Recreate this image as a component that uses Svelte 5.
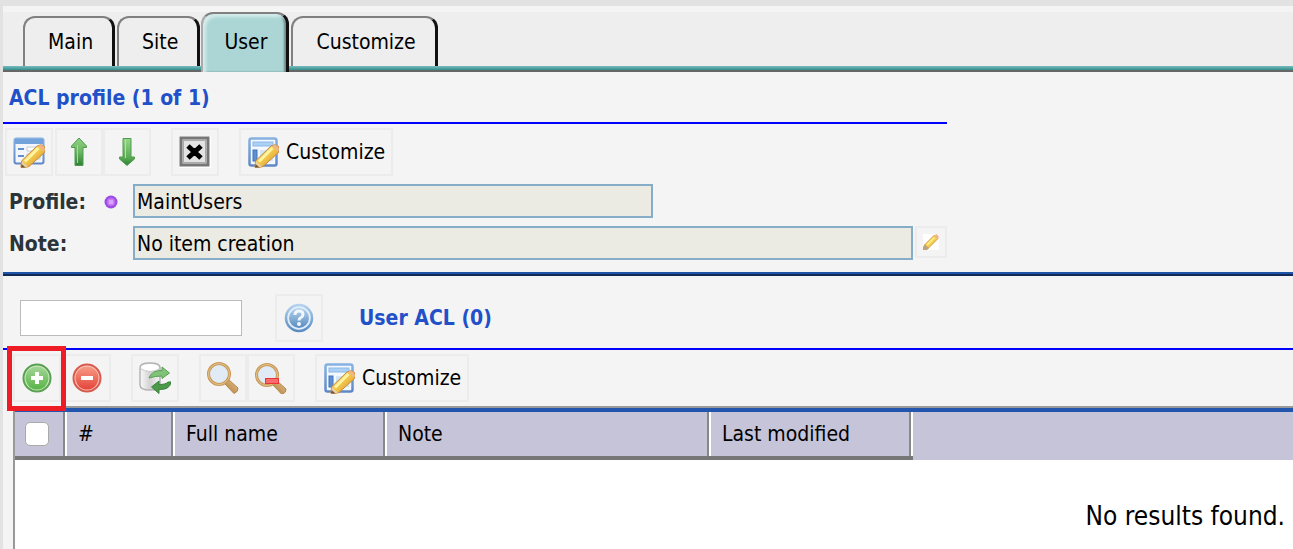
<script>
    const tabs = ['Main', 'Site', 'User', 'Customize'];
    let activeTab = 'User';

    let profile = 'MaintUsers';
    let note = 'No item creation';
    let search = '';
    let allSelected = false;

    const columns = [
        { label: '#', name: 'num' },
        { label: 'Full name', name: 'full-name' },
        { label: 'Note', name: 'note' },
        { label: 'Last modified', name: 'modified' }
    ];
</script>

<svg class="defs" width="0" height="0" aria-hidden="true">
    <defs>
        <linearGradient id="wood" x1="0" y1="0" x2="1" y2="1">
            <stop offset="0" stop-color="#fbe67a" />
            <stop offset="0.5" stop-color="#f3c548" />
            <stop offset="1" stop-color="#c98a35" />
        </linearGradient>
        <linearGradient id="frame" x1="0" y1="0" x2="0" y2="1">
            <stop offset="0" stop-color="#86b2e2" />
            <stop offset="1" stop-color="#6088c6" />
        </linearGradient>
        <linearGradient id="leaf" x1="0" y1="0" x2="0" y2="1">
            <stop offset="0" stop-color="#8fd183" />
            <stop offset="0.5" stop-color="#6db863" />
            <stop offset="1" stop-color="#2f7f35" />
        </linearGradient>
        <linearGradient id="leaf-down" x1="0" y1="0" x2="0" y2="1">
            <stop offset="0" stop-color="#98d68c" />
            <stop offset="0.7" stop-color="#5cab54" />
            <stop offset="1" stop-color="#317f36" />
        </linearGradient>
        <linearGradient id="green-ball" x1="0" y1="0" x2="0" y2="1">
            <stop offset="0" stop-color="#a4d596" />
            <stop offset="1" stop-color="#58b446" />
        </linearGradient>
        <linearGradient id="red-ball" x1="0" y1="0" x2="0" y2="1">
            <stop offset="0" stop-color="#f79b86" />
            <stop offset="1" stop-color="#e5443a" />
        </linearGradient>
        <linearGradient id="blue-ball" x1="0" y1="0" x2="0" y2="1">
            <stop offset="0" stop-color="#b4d2ee" />
            <stop offset="1" stop-color="#5a8cc0" />
        </linearGradient>
        <linearGradient id="metal" x1="0" y1="0" x2="1" y2="0">
            <stop offset="0" stop-color="#fafafa" />
            <stop offset="0.5" stop-color="#d2d2d2" />
            <stop offset="1" stop-color="#f4f4f4" />
        </linearGradient>
        <linearGradient id="handle" x1="0" y1="1" x2="1" y2="0">
            <stop offset="0" stop-color="#a9793d" />
            <stop offset="1" stop-color="#e8c48a" />
        </linearGradient>
    </defs>
</svg>

{#snippet pencil()}
    <path d="M8.500 25 24 10Q28 7.500 31 10T31 17L16 30.500Q12 32 8 31.500Z" fill="url(#wood)" stroke="#c78b3d" />
    <path d="m12 25.500 13.500-13.500" stroke="#fdf3a2" stroke-width="3" />
    <path d="m25 10 6 6q1.500-3-.5-5.500T25 10Z" fill="#efb58b" />
    <path d="m9 25.500 6 5-3 1H8Z" fill="#ead1a4" />
    <path d="m8.500 28 4 3.500H8Z" fill="#73532f" />
{/snippet}

{#snippet customizeIcon()}
    <svg class="icon" viewBox="0 0 32 32" fill="none" aria-hidden="true">
        <rect x="2.500" y="2.500" width="27" height="27" rx="2" fill="#f3f8fe" stroke="url(#frame)" stroke-width="2.500" />
        <rect x="6" y="6" width="20" height="4" fill="#acd0f4" stroke="#8bb8e8" />
        <rect x="6" y="14" width="4" height="11" fill="#5c8fd3" stroke="#4475ba" />
        <rect x="13" y="14" width="13" height="11" fill="#d3e5f8" />
        {@render pencil()}
    </svg>
{/snippet}

{#snippet lens()}
    <path d="m17.500 21.500 4-4 9.500 8.500q.5 3.500-4 5.500Z" fill="url(#handle)" stroke="#b88648" />
    <circle cx="12" cy="12" r="10.500" fill="#e1ebf5" stroke="#c89957" stroke-width="3" />
    <circle cx="12" cy="12" r="10.500" stroke="#e5c48d" stroke-width="1" />
{/snippet}

<main class="page">
    <nav class="tabs">
        {#each tabs as tab}
            <a
                href="#{tab.toLowerCase()}"
                class="tab"
                class:active={tab === activeTab}
                aria-current={tab === activeTab ? 'page' : undefined}
                on:click|preventDefault={() => (activeTab = tab)}>{tab}</a>
        {/each}
    </nav>

    <section class="profile">
        <h2 class="title">ACL profile (1 of 1)</h2>

        <div class="toolbar">
            <button class="tool" aria-label="Edit">
                <svg class="icon" viewBox="0 0 32 32" fill="none" aria-hidden="true">
                    <rect x="1.500" y="2.500" width="29" height="25" rx="2" fill="#f3f7fd" stroke="url(#frame)" stroke-width="2" />
                    <path d="M2 3h28v5H2Z" fill="#74a3dc" />
                    <path d="M5 13h6M5 20h6" stroke="#5f90d2" stroke-width="2" />
                    <path d="M14 11h13v4H14Zm0 7h13v5H14Z" fill="#fff" stroke="#c6cbd3" />
                    {@render pencil()}
                </svg>
            </button>
            <button class="tool" aria-label="Previous">
                <svg class="icon" viewBox="0 0 32 32" fill="none" aria-hidden="true">
                    <path d="m16 2 7.500 8v1.500H20V29.500h-8v-18H8.500V10Z" fill="url(#leaf)" stroke="#4f9c4c" />
                    <path d="M14.500 9v18" stroke="#a5dc99" />
                </svg>
            </button>
            <button class="tool joined" aria-label="Next">
                <svg class="icon" viewBox="0 0 32 32" fill="none" aria-hidden="true">
                    <path d="m16 29.500 7.500-6.500v-2H20V2.500h-8V21H8.500v2Z" fill="url(#leaf-down)" stroke="#4f9c4c" />
                    <path d="M14.500 4v18" stroke="#b2e2a7" />
                </svg>
            </button>
            <button class="tool apart" aria-label="Close">
                <svg class="icon" viewBox="0 0 32 32" fill="none" aria-hidden="true">
                    <path d="M0 0h32v32H0Z" fill="#fff" />
                    <rect x="2" y="2" width="27" height="27" fill="#e3e3e3" stroke="#777" stroke-width="3" />
                    <rect x="4.500" y="4.500" width="22" height="22" stroke="#aaa" />
                    <path d="m9 10 13 12m0-12-13 12" stroke="#000" stroke-width="5" />
                    <path d="M12 12h7v8h-7Z" fill="#000" />
                </svg>
            </button>
            <button class="tool apart">{@render customizeIcon()}Customize</button>
        </div>

        <div class="field">
            <label for="profile">Profile:</label>
            <svg class="dot" viewBox="0 0 14 14" aria-hidden="true">
                <circle cx="7" cy="7" r="6.500" fill="#9c4ae4" />
                <circle cx="7" cy="7" r="4" fill="#c77cf7" stroke="#b468f2" />
                <path d="M5 5h4v4H5Z" fill="#dda2fb" />
            </svg>
            <input id="profile" class="short" type="text" bind:value={profile} readonly />
        </div>
        <div class="field">
            <label for="note">Note:</label>
            <input id="note" type="text" bind:value={note} readonly />
            <button class="tool small" aria-label="Edit note">
                <svg viewBox="0 0 16 16" aria-hidden="true">
                    <path d="M0 0h16v16H0Z" fill="#fff" />
                    <path d="M1.500 11 11.500 1l3.500 3.500L5.500 14Z" fill="#f4cc50" stroke="#d69943" />
                    <path d="m4 11 7.500-7.500" stroke="#fbec83" stroke-width="2" />
                    <path d="m11 1.500 3.500 3.500 1.500-2.500L13.500 0Z" fill="#edb68f" />
                    <path d="M0 12.500 2 10.500l4 4L4 16H0Z" fill="#bda47e" />
                </svg>
            </button>
        </div>
    </section>

    <section class="users">
        <div class="heading">
            <input class="search" type="text" aria-label="Search" bind:value={search} />
            <button class="tool" aria-label="Help">
                <svg class="icon" viewBox="0 0 32 32" fill="none" aria-hidden="true">
                    <circle cx="16" cy="16" r="13" fill="#e2eefa" stroke="url(#blue-ball)" stroke-width="2.500" />
                    <circle cx="16" cy="16" r="10" fill="url(#blue-ball)" />
                    <path d="M12 13q0-4 4-4t4 3.500q0 2-2 3T16 18.500" stroke="#f0f6fc" stroke-width="3" />
                    <circle cx="16" cy="22" r="2" fill="#f0f6fc" />
                </svg>
            </button>
            <h2>User ACL (0)</h2>
        </div>

        <div class="toolbar">
            <button class="tool marked" aria-label="Add">
                <svg class="icon" viewBox="0 0 32 32" fill="none" aria-hidden="true">
                    <circle cx="16" cy="16" r="13.500" fill="#d0ebc6" stroke="#57a150" stroke-width="2" />
                    <circle cx="16" cy="16" r="11.500" fill="url(#green-ball)" />
                    <path d="M16 10v12M10 16h12" stroke="#fff" stroke-width="4" />
                </svg>
            </button>
            <button class="tool" aria-label="Remove">
                <svg class="icon" viewBox="0 0 32 32" fill="none" aria-hidden="true">
                    <circle cx="16" cy="16" r="13.500" fill="#fac8bb" stroke="#d65b4d" stroke-width="2" />
                    <circle cx="16" cy="16" r="11.500" fill="url(#red-ball)" />
                    <path d="M10 16h12" stroke="#fff" stroke-width="4" />
                </svg>
            </button>
            <button class="tool apart" aria-label="Refresh from database">
                <svg class="icon" viewBox="0 0 32 32" fill="none" aria-hidden="true">
                    <path d="M1 5.500Q1 1 11 1t10 4.500V23q0 5-10 5T1 23Z" fill="url(#metal)" stroke="#b4b4b4" stroke-width="1.500" />
                    <ellipse cx="11" cy="5.500" rx="8.500" ry="3.500" fill="#fff" />
                    <path d="M2 7q9 5 18 0" stroke="#ccc" />
                    <path d="M10 16q3-8 13-7.500V5l7.500 6-7.500 5.500V14q-7 0-13 2Z" fill="#80c277" stroke="#5aa053" />
                    <path d="M32 20q-1 8-12 7.500v4L12.500 25l7.500-6v3.500q7 0 9-2.500Z" fill="#4c9a49" stroke="#39823b" />
                </svg>
            </button>
            <button class="tool apart" aria-label="Search">
                <svg class="icon" viewBox="0 0 32 32" fill="none" aria-hidden="true">
                    {@render lens()}
                </svg>
            </button>
            <button class="tool joined" aria-label="Clear search">
                <svg class="icon" viewBox="0 -1 32 32" fill="none" aria-hidden="true">
                    {@render lens()}
                    <rect x="10.500" y="15.500" width="13" height="5" fill="#fa6c6c" stroke="#ec3238" />
                </svg>
            </button>
            <button class="tool apart">{@render customizeIcon()}Customize</button>
        </div>

        <div class="results">
            <table>
                <thead>
                    <tr>
                        <th class="check">
                            <input type="checkbox" aria-label="Select all" bind:checked={allSelected} />
                        </th>
                        {#each columns as col}
                            <th class={col.name}>{col.label}</th>
                        {/each}
                        <th class="rest"></th>
                    </tr>
                </thead>
                <tbody>
                    <tr>
                        <td colspan="6">No results found.</td>
                    </tr>
                </tbody>
            </table>
        </div>
    </section>
</main>

<style>
    :global(body) {
        margin: 0;
        background: #f4f4f4;
    }

    .defs {
        position: absolute;
    }

    .page {
        display: flex;
        flex-direction: column;
        box-sizing: border-box;
        min-height: 100vh;
        border-top: 6px solid #e2e2e2;
        border-left: 3px solid #e2e2e2;
        padding-top: 6px;
        font-family: 'DejaVu Sans Condensed', Tahoma, 'DejaVu Sans', sans-serif;
        font-size: 21px;
        line-height: 24px;
        color: #000;
    }

    button,
    input {
        box-sizing: border-box;
        margin: 0;
        font: inherit;
        color: inherit;
    }

    .tabs {
        display: flex;
        align-items: flex-end;
        gap: 2px;
        height: 60px;
        padding-left: 20px;
        background: linear-gradient(#7bbcbc, #389393 60%, #666 70%) bottom / 100% 6px no-repeat #eee;
    }

    .tab {
        box-sizing: border-box;
        height: 50px;
        margin-bottom: 6px;
        padding: 12px 19px 0 23px;
        border: 2px solid #808080;
        border-right: 3px solid #111;
        border-bottom: 0;
        border-radius: 12px 12px 0 0;
        background: #eee;
        color: #000;
        text-decoration: none;
    }

    .tab.active {
        height: 60px;
        margin: 0 0 0 -1px;
        padding: 16px 19px 0 21px;
        border-left-color: #aaa;
        background: #acd6d5;
        box-shadow: inset 3px 3px 3px #d4ebea, inset -2px 0 2px #6d8b8a;
    }

    h2 {
        margin: 0;
        font-size: 21px;
        line-height: 24px;
        color: #2250c8;
    }

    .profile {
        padding-bottom: 6px;
        border-bottom: 2px solid #132a57;
        box-shadow: inset 0 -2px #1f55a8;
    }

    .title {
        max-width: 944px;
        padding: 14px 0 12px 6px;
        box-sizing: border-box;
        border-bottom: 2px solid #00f;
    }

    .toolbar {
        display: flex;
        gap: 2px;
        padding: 4px 2px 8px;
    }

    .tool {
        display: flex;
        align-items: center;
        gap: 7px;
        height: 48px;
        padding: 0 6px;
        border: 2px solid #ececec;
        background: #f4f4f4;
    }

    .tool.apart {
        margin-left: 18px;
    }

    .tool.joined {
        margin-left: -2px;
    }

    .icon {
        flex: none;
        width: 32px;
        height: 32px;
    }

    .field {
        display: flex;
        align-items: flex-start;
        margin-bottom: 8px;
        padding-left: 6px;
    }

    .field label {
        width: 124px;
        padding-top: 6px;
        font-weight: bold;
        color: #2b3439;
    }

    .dot {
        width: 14px;
        height: 14px;
        margin: 11px 15px 0 -29px;
    }

    .field input {
        width: 780px;
        height: 34px;
        padding: 4px 2px 2px;
        border: 2px solid #86adc8;
        background: #ebeae3;
        outline: 0;
    }

    .field input.short {
        width: 520px;
    }

    .field .tool.small {
        width: 32px;
        height: 32px;
        margin-left: 2px;
    }

    .users {
        display: flex;
        flex: 1;
        flex-direction: column;
    }

    .heading {
        display: flex;
        align-items: center;
        padding: 18px 0 6px 17px;
        border-bottom: 2px solid #00f;
    }

    .search {
        width: 222px;
        height: 36px;
        margin-right: 33px;
        padding: 2px 6px;
        border: 1px solid #bbb;
        background: #fff;
    }

    .heading h2 {
        margin-left: 36px;
    }

    .users .toolbar {
        padding: 4px 10px;
    }

    .marked {
        position: relative;
    }

    .marked::after {
        content: '';
        position: absolute;
        inset: -10px -7px -11px -8px;
        border: 5px solid #ee1c25;
    }

    .results {
        flex: 1;
        margin-left: 10px;
        border-top: 2px solid #999;
        border-left: 2px solid #999;
        background: #fff;
    }

    table {
        width: 100%;
        border-top: 4px solid #2256ae;
        border-spacing: 0;
        table-layout: fixed;
    }

    th {
        box-sizing: border-box;
        height: 48px;
        padding: 0 11px 4px;
        background: #c6c4d8;
        font-weight: normal;
        text-align: left;
        box-shadow: inset 0 -4px #777, inset -2px 0 #fff, inset -4px 0 #888;
    }

    .check {
        width: 52px;
        padding-left: 10px;
    }

    .check input {
        display: block;
        width: 24px;
        height: 24px;
        border: 1px solid #aaa;
        border-radius: 5px;
        background: #fff;
        appearance: none;
    }

    .check input:checked {
        background: #2256ae;
    }

    .num {
        width: 108px;
    }

    .full-name {
        width: 212px;
    }

    .note {
        width: 324px;
    }

    .modified {
        width: 202px;
    }

    .rest {
        box-shadow: none;
    }

    td {
        padding: 40px 8px 0;
        font-size: 26px;
        line-height: 32px;
        text-align: right;
    }
</style>
